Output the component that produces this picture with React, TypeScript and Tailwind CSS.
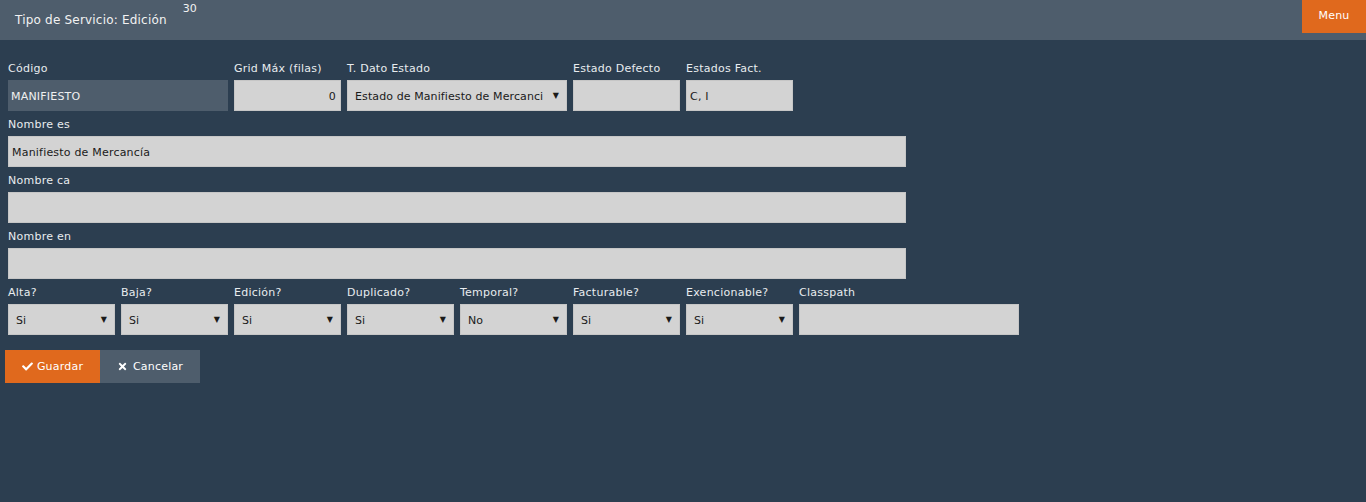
import React from "react";
import { FaCheck, FaTimes } from "react-icons/fa";

function Label({ children }: { children: React.ReactNode }) {
  return (
    <div className="h-[25px] flex items-end pb-[5px] leading-[13px] text-[11px] tracking-[0.25px] text-[#e8ecef] whitespace-nowrap">
      {children}
    </div>
  );
}

function TextInput({ w, value = "", right = false, dark = false }: { w: string; value?: string; right?: boolean; dark?: boolean }) {
  return (
    <div
      className={`${w} h-[31px] flex items-center pt-[3px] text-[11px] tracking-[0.2px] ${
        dark
          ? "bg-[#4e5d6c] text-[#f0f0f0] px-[3px]"
          : "bg-[#d3d3d3] border border-[#c6c6c6] text-[#1a1a1a] px-[3px]"
      } ${right ? "justify-end pr-[4px]" : ""}`}
    >
      {value}
    </div>
  );
}

function Select({ w, value }: { w: string; value: string }) {
  return (
    <div className={`${w} h-[31px] flex items-center gap-[8px] bg-[#d3d3d3] border border-[#c6c6c6] text-[11px] tracking-[0.1px] text-[#1a1a1a] pl-[7px] pr-[7px]`}>
      <span className="flex-1 min-w-0 whitespace-nowrap overflow-hidden pt-[3px]">{value}</span>
      <span className="shrink-0 text-[8px] leading-none">▼</span>
    </div>
  );
}

function Field({ label, children }: { label: string; children: React.ReactNode }) {
  return (
    <div className="flex flex-col">
      <Label>{label}</Label>
      {children}
    </div>
  );
}

export default function App() {
  const yesNo: [string, string][] = [
    ["Alta?", "Si"],
    ["Baja?", "Si"],
    ["Edición?", "Si"],
    ["Duplicado?", "Si"],
    ["Temporal?", "No"],
    ["Facturable?", "Si"],
    ["Exencionable?", "Si"],
  ];
  return (
    <div className="min-h-[502px] bg-[#2c3e50] font-['DejaVu_Sans',sans-serif]">
      <header className="h-[40px] bg-[#4e5d6c] flex justify-between items-start">
        <div className="flex items-start pl-[15px]">
          <span className="text-[12px] tracking-[0.2px] text-[#f2f2f2] mt-[13px] leading-[15px]">Tipo de Servicio: Edición</span>
          <span className="text-[11px] text-[#f2f2f2] ml-[16px] mt-[2px] leading-[13px]">30</span>
        </div>
        <button className="w-[64px] h-[33px] bg-[#e0691d] text-white text-[11px] tracking-[0.2px] flex items-center justify-center">
          Menu
        </button>
      </header>

      <main className="pl-[8px] pt-[15px]">
        <div className="flex gap-[6px]">
          <Field label="Código">
            <TextInput w="w-[220px]" value="MANIFIESTO" dark />
          </Field>
          <Field label="Grid Máx (filas)">
            <TextInput w="w-[107px]" value="0" right />
          </Field>
          <Field label="T. Dato Estado">
            <Select w="w-[220px]" value="Estado de Manifiesto de Mercanci" />
          </Field>
          <Field label="Estado Defecto">
            <TextInput w="w-[107px]" />
          </Field>
          <Field label="Estados Fact.">
            <TextInput w="w-[107px]" value="C, I" />
          </Field>
        </div>

        <Field label="Nombre es">
          <TextInput w="w-[898px]" value="Manifiesto de Mercancía" />
        </Field>
        <Field label="Nombre ca">
          <TextInput w="w-[898px]" />
        </Field>
        <Field label="Nombre en">
          <TextInput w="w-[898px]" />
        </Field>

        <div className="flex gap-[6px]">
          {yesNo.map(([l, v]) => (
            <Field key={l} label={l}>
              <Select w="w-[107px]" value={v} />
            </Field>
          ))}
          <Field label="Classpath">
            <TextInput w="w-[220px]" />
          </Field>
        </div>

        <div className="flex mt-[15px] -ml-[3px]">
          <button className="w-[95px] h-[33px] pt-[2px] bg-[#e0691d] text-white text-[11px] tracking-[0.2px] flex items-center justify-center gap-[4px]">
            <FaCheck className="w-[11px] h-[11px] -mt-[2px]" />
            Guardar
          </button>
          <button className="w-[100px] h-[33px] pt-[2px] bg-[#4e5d6c] text-white text-[11px] tracking-[0.2px] flex items-center justify-center gap-[5px]">
            <FaTimes className="w-[11px] h-[11px] -mt-[2px]" />
            Cancelar
          </button>
        </div>
      </main>
    </div>
  );
}
